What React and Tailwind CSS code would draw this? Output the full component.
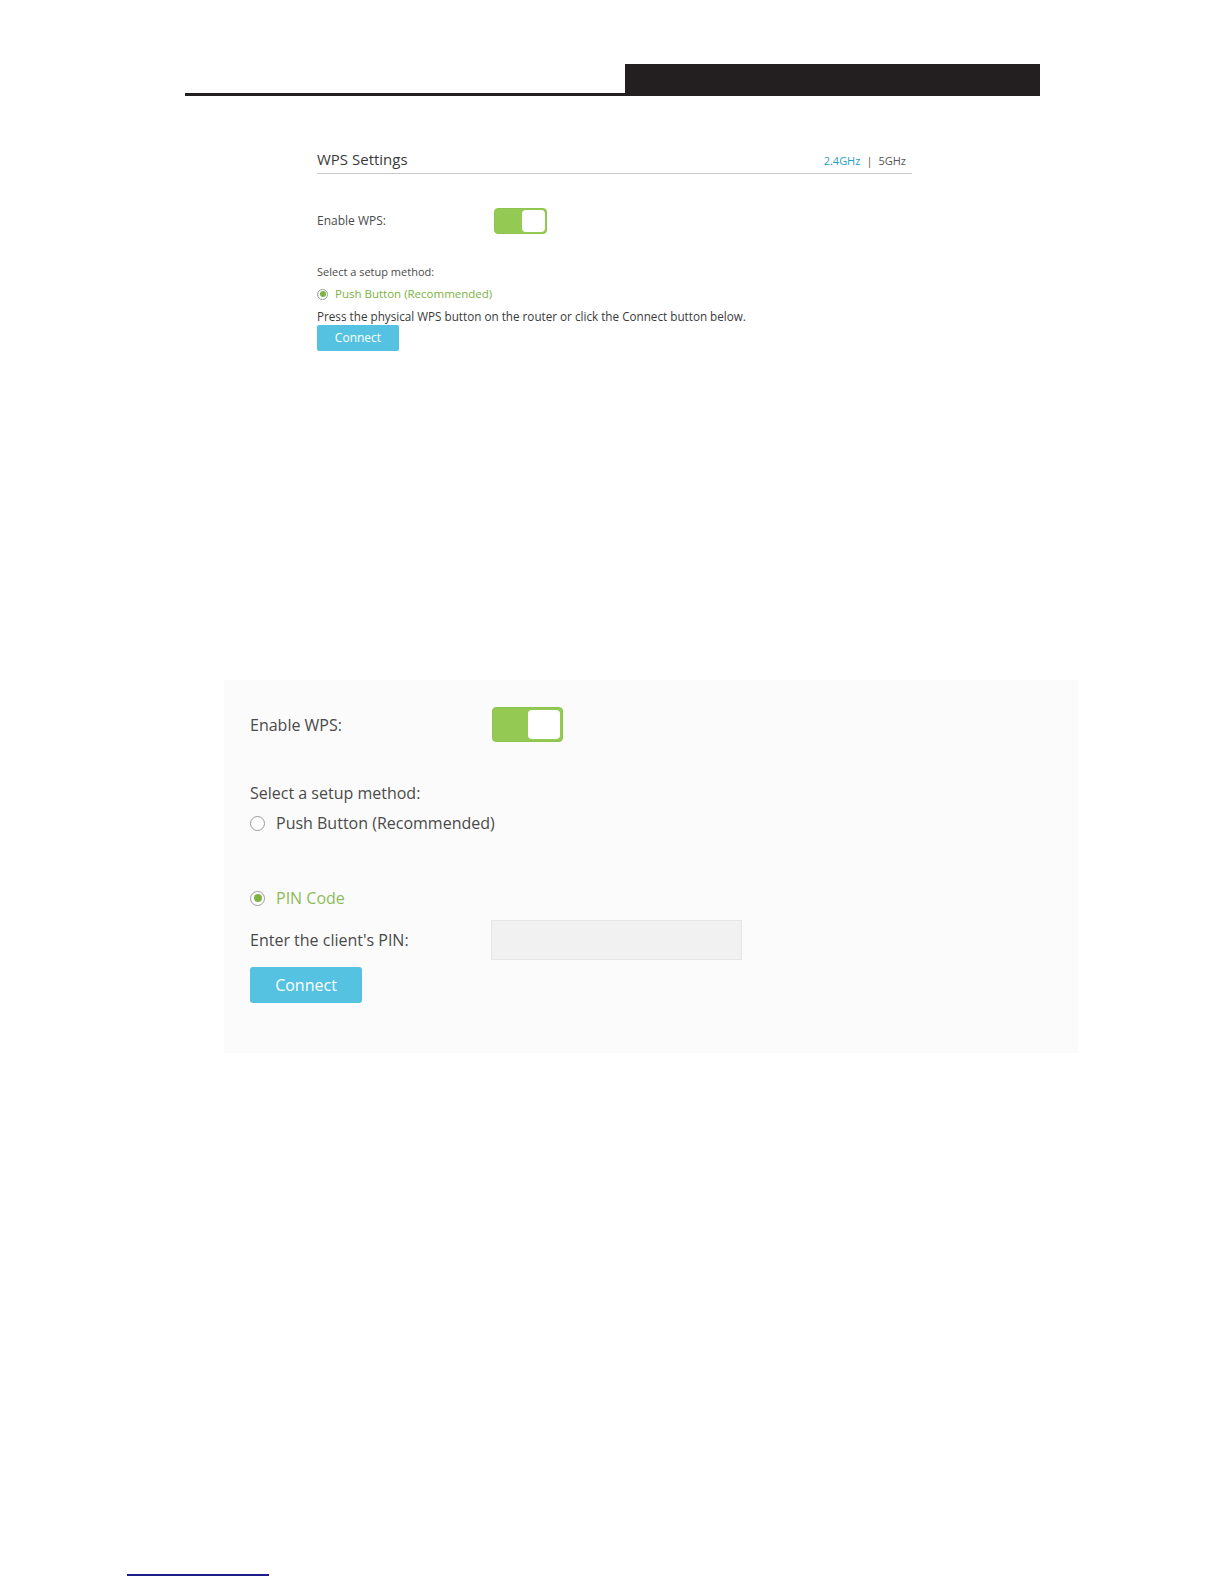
import React from 'react';

const font = { fontFamily: '"Open Sans", "DejaVu Sans", sans-serif' };

const Toggle = ({ big }) => (
  <div
    className={`flex rounded-[4px] border border-[#8cc44e] bg-[#94c954] ${
      big ? 'w-[71px] h-[35px] p-[2px]' : 'w-[53px] h-[26px] p-[1px]'
    } justify-end`}
  >
    <div className={`h-full rounded-[4px] bg-white ${big ? 'w-[32px]' : 'w-[23px]'}`} />
  </div>
);

const Radio = ({ checked, big }) => (
  <span
    className={`inline-flex items-center justify-center rounded-full border border-[#9a9a9a] bg-white ${
      big ? 'w-[15px] h-[15px]' : 'w-[11px] h-[11px]'
    }`}
  >
    {checked && <span className={`rounded-full bg-[#7cb342] ${big ? 'w-[8px] h-[8px]' : 'w-[6px] h-[6px]'}`} />}
  </span>
);

export default function App() {
  return (
    <div className="relative min-h-[1584px] bg-white text-[#4a4a4a]" style={font}>
      {/* page header */}
      <div className="flex items-end pt-[64px]">
        <div className="ml-[185px] w-[440px] h-[3px] bg-[#231f20]" />
        <div className="w-[415px] h-[32px] bg-[#231f20]" />
      </div>

      {/* small screenshot */}
      <div className="ml-[317px] w-[595px] mt-[53px]">
        <div className="flex items-end justify-between border-b border-[#c8c8c8] pb-[4px]">
          <span className="text-[15px] leading-[20px] text-[#3a3a3a]">WPS Settings</span>
          <span className="text-[11px] leading-[16px] pr-[6px]">
            <span className="text-[#2a9fc9]">2.4GHz</span>
            <span className="mx-[6px] text-[#555]">|</span>
            <span className="text-[#555]">5GHz</span>
          </span>
        </div>
        <div className="flex items-center mt-[34px]">
          <span className="w-[177px] text-[12px] leading-[16px]">Enable WPS:</span>
          <Toggle />
        </div>
        <div className="mt-[30px] text-[11px] leading-[16px]">Select a setup method:</div>
        <div className="flex items-center gap-[7px] mt-[6px] text-[11.5px] leading-[16px] text-[#7cb342]">
          <Radio checked />
          <span>Push Button (Recommended)</span>
        </div>
        <div className="mt-[6px] text-[11.7px] leading-[16px] text-[#3a3a3a]">
          Press the physical WPS button on the router or click the Connect button below.
        </div>
        <button className="mt-[1px] w-[82px] h-[26px] rounded-[2px] bg-[#56c2e1] text-white text-[12px]">
          Connect
        </button>
      </div>

      {/* large screenshot */}
      <div className="ml-[224px] mt-[329px] w-[854px] h-[373px] bg-[#fbfbfb] pl-[26px] pt-[27px]">
        <div className="flex items-center">
          <span className="w-[242px] text-[16px] leading-[22px]">Enable WPS:</span>
          <Toggle big />
        </div>
        <div className="mt-[40px] text-[16px] leading-[22px]">Select a setup method:</div>
        <div className="flex items-center gap-[11px] mt-[8px] text-[16px] leading-[22px]">
          <Radio big />
          <span>Push Button (Recommended)</span>
        </div>
        <div className="flex items-center gap-[11px] mt-[53px] text-[16px] leading-[22px] text-[#8bbb5a]">
          <Radio checked big />
          <span>PIN Code</span>
        </div>
        <div className="flex items-center mt-[11px]">
          <span className="w-[241px] text-[16px] leading-[22px]">Enter the client's PIN:</span>
          <div className="w-[251px] h-[40px] bg-[#f1f1f1] border border-[#e6e6e6]" />
        </div>
        <button className="mt-[7px] w-[112px] h-[36px] rounded-[3px] bg-[#56c2e1] text-white text-[16px]">
          Connect
        </button>
      </div>

      {/* footer link rule */}
      <div className="absolute left-[127px] top-[1574px] w-[142px] h-[2px] bg-[#1c1c8a]" />
    </div>
  );
}
